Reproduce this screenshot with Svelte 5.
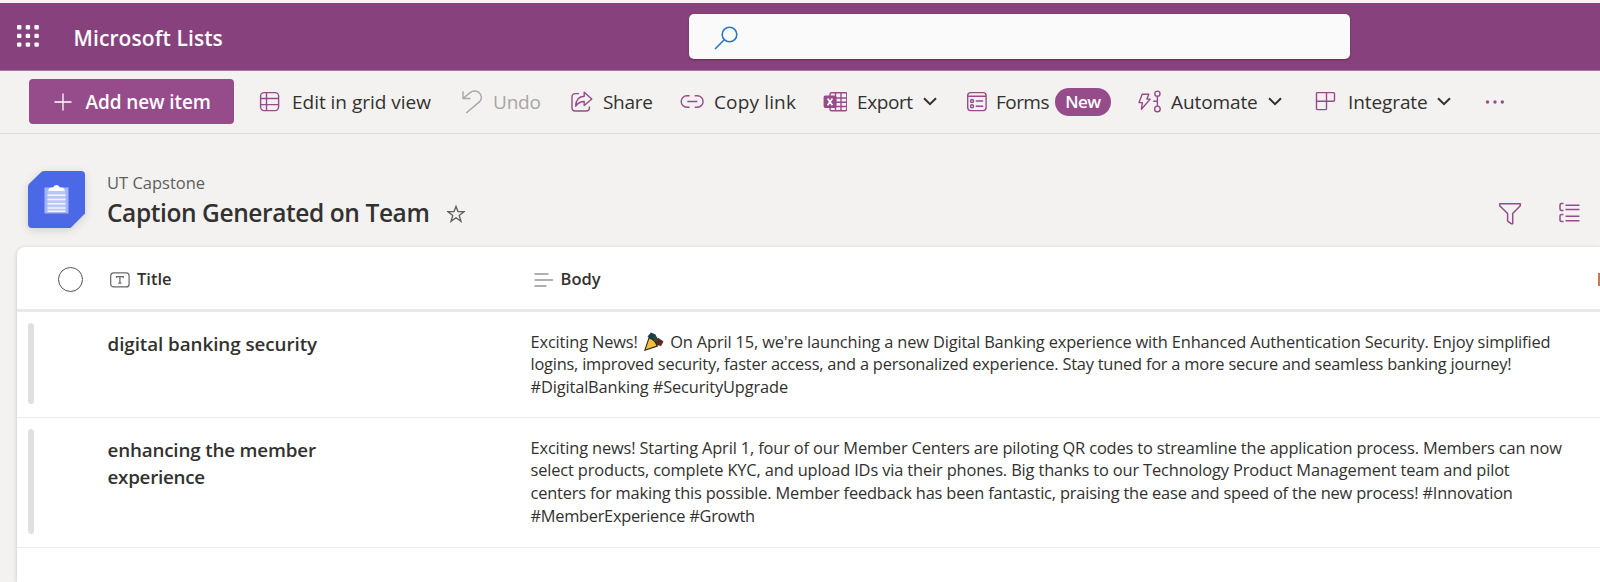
<script>
  const commands = [
    { id: 'grid', label: 'Edit in grid view', gap: 9, ls: -0.02 },
    { id: 'undo', label: 'Undo', gap: 8, ls: -0.2, disabled: true },
    { id: 'share', label: 'Share', gap: 9, ls: -0.3 },
    { id: 'link', label: 'Copy link', gap: 10, ls: 0.15 },
    { id: 'excel', label: 'Export', gap: 10, ls: -0.4, menu: true },
    { id: 'forms', label: 'Forms', gap: 6, ls: -0.55, badge: 'New' },
    { id: 'automate', label: 'Automate', gap: 10, ls: -0.1, menu: true },
    { id: 'integrate', label: 'Integrate', gap: 9, ls: -0.1, menu: true }
  ];

  const rows = [
    {
      title: [{ t: 'digital banking security', ls: -0.05 }],
      body: [
        { pre: 'Exciting News!', t: "On April 15, we're launching a new Digital Banking experience with Enhanced Authentication Security. Enjoy simplified", ls: -0.145 },
        { t: 'logins, improved security, faster access, and a personalized experience. Stay tuned for a more secure and seamless banking journey!', ls: -0.215 },
        { t: '#DigitalBanking #SecurityUpgrade', ls: -0.14 }
      ]
    },
    {
      title: [{ t: 'enhancing the member', ls: -0.16 }, { t: 'experience', ls: -0.25 }],
      body: [
        { t: 'Exciting news! Starting April 1, four of our Member Centers are piloting QR codes to streamline the application process. Members can now', ls: -0.147 },
        { t: 'select products, complete KYC, and upload IDs via their phones. Big thanks to our Technology Product Management team and pilot', ls: -0.138 },
        { t: 'centers for making this possible. Member feedback has been fantastic, praising the ease and speed of the new process! #Innovation', ls: -0.18 },
        { t: '#MemberExperience #Growth', ls: -0.29 }
      ]
    }
  ];
</script>

{#snippet icon(id)}
  <svg class="icon" viewBox="0 0 24 24" width="24" height="24">
    {#if id === 'grid'}
      <rect x="1.6" y="2.6" width="18" height="18" rx="3.5" />
      <path d="M7.5 2.6v18M1.6 8.5h18M1.6 14.6h18" />
    {:else if id === 'undo'}
      <path d="M2 1.2v7.3h7.4M2.3 8.2 9.2 2.6C12.6-.1 17 .8 19 3.600c2 2.900 1.400 6.200-.6 8.300L5.200 23" />
    {:else if id === 'share'}
      <path d="M9 3.600H5.200a3.200 3.200 0 0 0-3.200 3.200v11a3.200 3.200 0 0 0 3.200 3.200h11a3.200 3.200 0 0 0 3.200-3.200v-1.300" />
      <path d="M14.200 2.300v4C9 6.500 5.900 9.600 5.700 16.200c2.200-3.200 4.600-4.600 8.500-4.700v4L21.800 9z" />
    {:else if id === 'link'}
      <path d="M9.600 5.800H6.900a5 5 0 0 0 0 11.400h2.700M14.700 5.800h2.700a5 5 0 0 1 0 11.400h-2.700M7.300 11.500h10" />
    {:else if id === 'excel'}
      <path d="M7 6.500V4.200q0-1.500 1.500-1.500h13.800q1.500 0 1.500 1.500v15q0 1.500-1.500 1.500H8.500Q7 20.700 7 19.200V17M12.500 2.700v18M18 2.700v18M12.500 8h11M12.500 12.300h11M12.500 16.500h11" />
      <rect class="solid" x="1.300" y="6.300" width="11.500" height="11" rx="1" />
      <path class="cut" d="m4.600 8.600 4.800 6.600M9.400 8.600l-4.800 6.600" />
    {:else if id === 'forms'}
      <rect x="1.700" y="2.600" width="18.400" height="18" rx="3" />
      <path d="M1.700 6.300h18.400M9.700 11h7.500M9.700 16.300h7.500" />
      <circle cx="6" cy="11" r="1.500" /><circle cx="6" cy="16.300" r="1.500" />
    {:else if id === 'automate'}
      <path d="M5.200 4.200h6.600l-1.900 4.900h3.300L4.400 19.200l1-6.600H2z" />
      <circle cx="20.400" cy="3.700" r="2.600" /><circle cx="20.400" cy="18.900" r="2.800" />
      <path d="M20.400 6.300v9.800M20.400 11.300h-4.200" />
    {:else if id === 'integrate'}
      <path d="M2.500 2.600h16q1 0 1 1v6.700q0 1-1 1h-7v7.300q0 1-1 1h-8q-1 0-1-1v-15q0-1 1-1zM1.500 11.300h10M11.500 2.600v8.700" />
    {/if}
  </svg>
{/snippet}

<div class="page">
  <header class="suite">
    <svg class="waffle" viewBox="0 0 22 22" width="22" height="22">
      {#each [0, 8.700, 17.400] as y}
        {#each [0, 8.700, 17.400] as x}
          <rect {x} {y} width="4.400" height="4.400" rx="1.200" />
        {/each}
      {/each}
    </svg>
    <span class="brand">Microsoft Lists</span>
    <div class="search">
      <svg viewBox="0 0 24 24" width="24" height="24">
        <circle cx="15.500" cy="8.500" r="7.300" /><path d="M10.300 13.700 1 23" />
      </svg>
    </div>
  </header>

  <nav class="commands">
    <button class="add">
      <svg viewBox="0 0 18 18" width="18" height="18"><path d="M9 .5v17M.5 9h17" /></svg>
      Add new item
    </button>
    {#each commands as c}
      <button class="command" class:disabled={c.disabled} style:gap="{c.gap}px">
        {@render icon(c.id)}
        <span style:letter-spacing="{c.ls}px">{c.label}</span>
        {#if c.badge}<span class="badge">{c.badge}</span>{/if}
        {#if c.menu}
          <svg class="chevron" viewBox="0 0 14 9" width="14" height="9"><path d="m1 1.200 6 6 6-6" /></svg>
        {/if}
      </button>
    {/each}
    <button class="more">
      <svg viewBox="0 0 20 4" width="20" height="4">
        <circle cx="2.500" cy="2" r="1.700" /><circle cx="10" cy="2" r="1.700" /><circle cx="17.300" cy="2" r="1.700" />
      </svg>
    </button>
  </nav>

  <section class="heading">
    <svg class="tile" viewBox="0 0 57 57" width="57" height="57">
      <path fill="#4b69e6" d="M16.500 0H53q4 0 4 4v38.500L42.500 57H4q-4 0-4-4V16q0-2 1.400-3.400L12.800 1.400Q14.300 0 16.500 0z" />
      <rect x="16.500" y="16.500" width="24" height="26" fill="#a3b4f5" />
      <rect x="19.500" y="19" width="18" height="21" fill="#b9c6f8" />
      <path stroke="#f3f5fe" stroke-width="1.500" d="M19.500 24.300h18M19.500 28.500h18M19.500 32.700h18M19.500 36.900h18M19.500 40.200h18" />
      <path fill="#fff" d="M20.500 20v-1q0-2.500 3-2.500h1.500q1-2.500 3.500-2.500t3.500 2.500h1.500q3 0 3 2.500v1z" />
    </svg>
    <div class="names">
      <span class="site">UT Capstone</span>
      <h1>
        Caption Generated on Team
        <svg viewBox="0 0 18 18" width="18" height="18"><path d="m9 1.300 2 5.400h5.900l-4.700 3.700 1.800 5.900L9 12.700l-5 3.600 1.800-5.900L1.100 6.700H7z" /></svg>
      </h1>
    </div>
    <div class="tools">
      <svg viewBox="0 0 24 24" width="24" height="24"><path d="M1.700 1.700h20.600v2l-7.600 7.800v10.200h-1.500l-3.600-2.600v-7.600L1.700 3.700z" /></svg>
      <svg viewBox="0 0 22 22" width="22" height="22">
        <path d="M4.500 1.500h-2Q1 1.500 1 3v4q0 1.500 1.500 1.500h2M4.500 12.500h-2Q1 12.500 1 14v4q0 1.500 1.500 1.500h2M6.500 3.200h14M6.500 7.500h14M6.500 14.200h14M6.500 18.700h14" />
      </svg>
    </div>
  </section>

  <main class="list">
    <div class="line head">
      <span class="select"></span>
      <div class="col-title">
        <svg viewBox="0 0 20 16" width="20" height="16">
          <rect x=".7" y=".9" width="18.400" height="14" rx="3" />
          <path d="M6.500 6V4.700h6.800V6M9.900 4.700v6.500M8.300 11.200h3.200" />
        </svg>
        <span>Title</span>
      </div>
      <div class="col-body">
        <svg class="lines" viewBox="0 0 20 16" width="20" height="16"><path d="M.5 2h14M.5 8h18.500M.5 14h12" /></svg>
        <span>Body</span>
      </div>
      <span class="next"></span>
    </div>
    {#each rows as r}
      <div class="line row">
        <span class="bar"></span>
        <div class="title">
          {#each r.title as l}<div style:letter-spacing="{l.ls}px">{l.t}</div>{/each}
        </div>
        <div class="body">
          {#each r.body as l}
            <div style:letter-spacing="{l.ls}px">
              {#if l.pre}{l.pre}
                <svg class="party" viewBox="0 0 20 19" width="20" height="19">
                  <path fill="#19404d" d="M3.500 4.500 7 .5l4.500 2 1.500 3.500-3 2.500L6 6.500z" />
                  <path fill="#5d2a24" d="m11 7.500 3.500-1.500 5 3.500-2.500 4.500-4.500-1z" />
                  <path fill="#2b4a3c" d="m8 4 5 1 1.500 4-3 1z" />
                  <path fill="#f5bd3c" stroke="#2b2417" stroke-width="1.100" d="M.9 18.200 5 5.900q6 1.600 8.300 8.200z" />
                </svg>
              {/if}{l.t}
            </div>
          {/each}
        </div>
      </div>
    {/each}
  </main>
</div>

<style>
  :global(body) { margin: 0; }
  .page {
    width: 1600px; height: 582px; overflow: hidden; box-sizing: border-box;
    padding-top: 3px; display: flex; flex-direction: column;
    background: linear-gradient(#f7f3f6 3px, #f3f2f1 3px);
    font-family: "Open Sans", "Noto Sans", sans-serif; color: #323130;
  }
  svg { fill: none; flex: none; display: block; }
  button { border: 0; background: none; padding: 0; font: inherit; color: inherit; }

  .suite {
    height: 68px; flex: none; background: #87427d; display: flex; align-items: center;
    color: #fff; box-sizing: border-box; padding-left: 17px; border-bottom: 1px solid #a877a0;
  }
  .waffle { fill: #fff; margin-top: -1px; }
  .brand { margin-left: 34.500px; width: 615.500px; font-size: 21px; font-weight: 600; letter-spacing: .1px; padding-top: 2px; }
  .search {
    width: 661px; height: 45px; border-radius: 5px; background: #fafafa;
    box-shadow: 0 1px 2px rgba(50, 10, 45, .45); display: flex; align-items: center; padding-left: 25px; box-sizing: border-box;
  }
  .search svg { stroke: #2b77c2; stroke-width: 1.600; margin-top: 2px; }

  .commands {
    height: 63px; flex: none; box-sizing: border-box; padding: 0 0 1px 28.500px; border-bottom: 1px solid #dddcdb;
    display: grid; align-items: center; font-size: 19px;
    grid-template-columns: 230.500px 202px 109px 110px 143px 143px 171px 178px 170px 20px;
  }
  .add {
    width: 205px; height: 45px; border-radius: 4px; background: #964b8a; color: #fff;
    display: flex; align-items: center; gap: 14px; padding-left: 25px; font-weight: 600; letter-spacing: -.1px;
  }
  .add svg { stroke: #fff; stroke-width: 1.300; }
  .command { display: flex; align-items: center; white-space: nowrap; }
  .icon { stroke: #964b8a; stroke-width: 1.400; stroke-linejoin: round; }
  .solid { fill: #964b8a; }
  .cut { stroke: #fff; stroke-width: 1.700; }
  .disabled { color: #a8a6a4; }
  .disabled .icon { stroke: #a8a6a4; }
  .chevron { stroke: #323130; stroke-width: 2; }
  .badge {
    width: 56px; height: 28px; border-radius: 14px; background: #964b8a; color: #fff;
    font-size: 17px; font-weight: 600; line-height: 27px; text-align: center; letter-spacing: -.5px;
  }
  .more svg { fill: #964b8a; }

  .heading { height: 113px; flex: none; display: flex; padding-left: 28px; }
  .tile { margin-top: 37px; filter: drop-shadow(0 2px 4px rgba(0, 0, 0, .14)); }
  .names { margin: 37px 0 0 22px; width: 1391px; }
  .site { display: block; font-size: 16.500px; line-height: 24px; color: #605e5c; }
  h1 { margin: 2px 0 0; font-size: 24.500px; line-height: 32px; font-weight: 600; letter-spacing: -.41px; display: flex; align-items: center; gap: 18px; }
  h1 svg { stroke: #605e5c; stroke-width: 1.300; margin-top: 2px; }
  .tools { display: flex; gap: 37px; margin-top: 68px; }
  .tools svg { stroke: #964b8a; stroke-width: 1.500; stroke-linejoin: round; }

  .list { margin-left: 17px; flex: 1; background: #fff; border-radius: 8px 0 0 0; box-shadow: 0 1px 4px rgba(0, 0, 0, .2); }
  .line { display: flex; box-sizing: border-box; }
  .head { height: 65px; border-bottom: 3px solid #e9e9e9; align-items: center; padding: 3px 0 0 41px; font-size: 16.500px; font-weight: 600; }
  .head span { position: relative; }
  .select { width: 25px; height: 25px; box-sizing: border-box; border: 1.500px solid #565452; border-radius: 50%; }
  .head svg { stroke: #6b6967; stroke-width: 1.200; }
  .head .lines { stroke: #979593; stroke-width: 1.600; }
  .col-title, .col-body { display: flex; align-items: center; gap: 7px; }
  .col-title span, .col-body span { padding-bottom: 2px; }
  .col-title { margin-left: 27px; width: 423.500px; }
  .col-body { width: 1064.500px; }
  .next { width: 2px; height: 13px; background: #c77b4d; }
  .row { height: 106px; border-bottom: 1px solid #ebebeb; padding: 11px 0 13px 11px; }
  .row:last-child { height: 130px; }
  .bar { width: 6px; border-radius: 3px; background: #e0e0e0; }
  .title { margin: 7.500px 0 0 73.500px; width: 423px; font-size: 18.800px; line-height: 27px; font-weight: 600; }
  .body { padding-top: 7.500px; font-size: 16.400px; line-height: 22.700px; white-space: nowrap; }
  .party { display: inline-block; vertical-align: -3px; margin: -3px 6.500px 0 6px; }
</style>
